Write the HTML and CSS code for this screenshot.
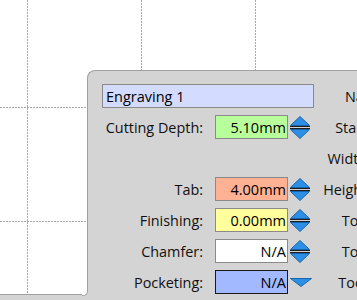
FILE: index.html
```html
<!DOCTYPE html>
<html lang="en">
<head>
    <title>Cut Settings</title>
    <link rel="stylesheet" href="styles.css">
</head>
<body>
    <div class="canvas">
        <svg class="grid" width="357" height="295">
            <line x1="27.5" y1="0" x2="27.5" y2="295" />
            <line x1="141.5" y1="0" x2="141.5" y2="295" />
            <line x1="255.5" y1="0" x2="255.5" y2="295" />
            <line x1="0" y1="107.5" x2="357" y2="107.5" />
            <line x1="0" y1="221.5" x2="357" y2="221.5" />
        </svg>
    </div>

    <div class="panel">
        <div class="form">
            <input class="field name-field" value="Engraving 1">
            <span class="rlabel rlabel-name">Name:</span>

            <label class="label">Cutting Depth:</label>
            <input class="field depth" value="5.10mm">
            <svg class="spin" width="22" height="25" viewBox="0 0 22 25">
                <path class="tri" d="M11 1.5 L20.5 10.5 L1.5 10.5 Z" />
                <path class="bar" d="M1 11.5 H21 M1 13.5 H21" />
                <path class="tri" d="M1.5 14.5 L20.5 14.5 L11 23.5 Z" />
            </svg>
            <span class="rlabel">Start:</span>

            <span class="label"></span>
            <span></span>
            <span></span>
            <span class="rlabel">Width:</span>

            <label class="label">Tab:</label>
            <input class="field tab" value="4.00mm">
            <svg class="spin" width="22" height="25" viewBox="0 0 22 25">
                <path class="tri" d="M11 1.5 L20.5 10.5 L1.5 10.5 Z" />
                <path class="bar" d="M1 11.5 H21 M1 13.5 H21" />
                <path class="tri" d="M1.5 14.5 L20.5 14.5 L11 23.5 Z" />
            </svg>
            <span class="rlabel">Height:</span>

            <label class="label">Finishing:</label>
            <input class="field finish" value="0.00mm">
            <svg class="spin" width="22" height="25" viewBox="0 0 22 25">
                <path class="tri" d="M11 1.5 L20.5 10.5 L1.5 10.5 Z" />
                <path class="bar" d="M1 11.5 H21 M1 13.5 H21" />
                <path class="tri" d="M1.5 14.5 L20.5 14.5 L11 23.5 Z" />
            </svg>
            <span class="rlabel">Top:</span>

            <label class="label">Chamfer:</label>
            <input class="field chamfer" value="N/A">
            <svg class="spin" width="22" height="25" viewBox="0 0 22 25">
                <path class="tri" d="M11 1.5 L20.5 10.5 L1.5 10.5 Z" />
                <path class="bar" d="M1 11.5 H21 M1 13.5 H21" />
                <path class="tri" d="M1.5 14.5 L20.5 14.5 L11 23.5 Z" />
            </svg>
            <span class="rlabel">Top:</span>

            <label class="label">Pocketing:</label>
            <input class="field pocket" value="N/A">
            <svg class="spin" width="24" height="25" viewBox="0 0 24 25">
                <path class="tri" d="M1.5 8.5 L22.5 8.5 L12 16.5 Z" />
            </svg>
            <span class="rlabel">Tool:</span>
        </div>
    </div>
</body>
</html>
```

FILE: styles.css
```css
:root {
    --panel-bg: #d4d4d4;
    --edge: #a0a0a0;
    --text: #101010;
}

body {
    margin: 0;
    width: 357px;
    height: 300px;
    overflow: hidden;
    position: relative;
    background-color: var(--panel-bg);
    font-family: 'Open Sans', 'Noto Sans', sans-serif;
    font-size: 14.4px;
    color: var(--text);
}

.canvas {
    position: absolute;
    left: 0;
    top: 0;
    width: 357px;
    height: 294px;
    background-color: #fff;
    border-bottom: 1px solid var(--edge);
}

.grid line {
    stroke: #a8a8a8;
    stroke-width: 1;
    stroke-dasharray: 2 1;
}

.panel {
    position: absolute;
    left: 87px;
    top: 70px;
    width: 320px;
    height: 260px;
    background-color: var(--panel-bg);
    border-left: 1px solid var(--edge);
    border-top: 1px solid var(--edge);
    border-top-left-radius: 8px;
    padding: 13px 0 0 14px;
    box-sizing: border-box;
}

/* small rounded joint where the canvas bottom meets the panel edge */
.panel::before {
    content: "";
    position: absolute;
    left: -6px;
    top: 219px;
    width: 5px;
    height: 5px;
    border-right: 1px solid var(--edge);
    border-bottom: 1px solid var(--edge);
    border-bottom-right-radius: 5px;
    background-color: #fff;
    box-shadow: 3px 3px 0 3px var(--panel-bg);
}

.form {
    display: grid;
    grid-template-columns: 113px 73px 26px 57px;
    grid-auto-rows: 24px;
    row-gap: 7px;
    align-items: center;
}

.label {
    text-align: right;
    padding-right: 12px;
}

.rlabel {
    text-align: right;
    white-space: nowrap;
}

.rlabel-name {
    margin-right: -18px;
}

.field {
    box-sizing: border-box;
    height: 24px;
    margin: 0;
    padding: 0 1px 0 3px;
    border: 1px solid #8a8a8a;
    font-family: inherit;
    font-size: 14.5px;
    color: #000;
    text-align: right;
    outline: none;
}

.name-field {
    grid-column: 1 / 4;
    width: 212px;
    text-align: left;
    background-color: #d3dcff;
}

.depth {
    background-color: #b8ff9c;
}

.tab {
    background-color: #ffb293;
}

.finish {
    background-color: #ffff9c;
}

.chamfer {
    background-color: #fff;
}

.pocket {
    background-color: #a3b9ff;
    border-color: #1a1a1a;
}

.spin {
    margin-left: 1px;
}

.spin .tri {
    fill: #2b8fe8;
    stroke: #1c64a8;
    stroke-width: 1;
}

.spin .bar {
    stroke: #1e1e1e;
    stroke-width: 1.2;
}
```
